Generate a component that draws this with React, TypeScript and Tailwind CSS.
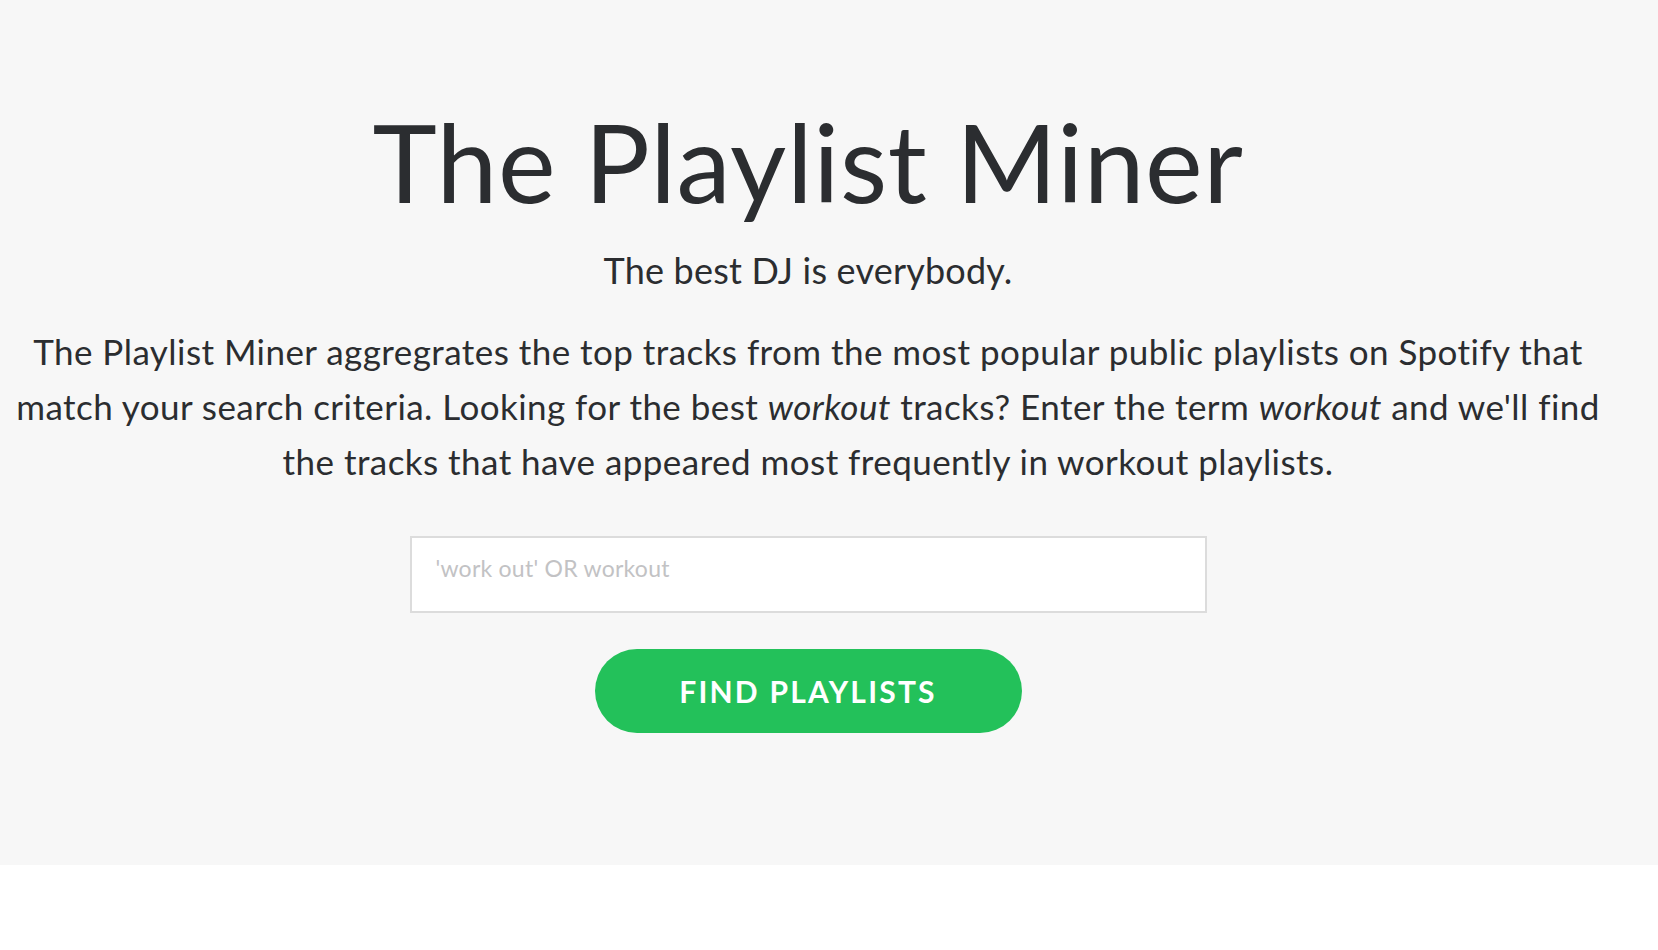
import React from "react";

export default function App() {
  return (
    <div className="min-h-[950px] bg-white" style={{ fontFamily: "Lato, 'Noto Sans', sans-serif" }}>
      <section className="h-[865px] bg-[#f7f7f7] text-[#2b2d30]">
        <div className="w-[1616px] flex flex-col items-center pt-[96px]">
          <h1 className="text-[109px] leading-[130px] font-normal tracking-[0.6px] whitespace-nowrap">The Playlist Miner</h1>
          <p className="mt-[22px] text-[36px] leading-[44px] tracking-[0.2px] whitespace-nowrap">The best DJ is everybody.</p>
          <p className="mt-[32px] text-[35px] leading-[55px] tracking-[0.45px] text-center whitespace-nowrap">
            The Playlist Miner aggregrates the top tracks from the most popular public playlists on Spotify that
            <br />
            match your search criteria. Looking for the best <em>workout</em> tracks? Enter the term <em>workout</em> and we'll find
            <br />
            the tracks that have appeared most frequently in workout playlists.
          </p>
          <input
            type="text"
            placeholder="'work out' OR workout"
            className="mt-[47px] w-[797px] h-[77px] border-2 border-[#dcdcdc] bg-white px-[24px] pb-[13px] text-[23px] tracking-[0.25px] placeholder:text-[#c2c2c4] outline-none"
          />
          <button className="mt-[36px] w-[427px] h-[84px] rounded-full bg-[#23c15a] text-white text-[30px] leading-[36px] font-bold tracking-[2.2px]">
            FIND PLAYLISTS
          </button>
        </div>
      </section>
    </div>
  );
}
